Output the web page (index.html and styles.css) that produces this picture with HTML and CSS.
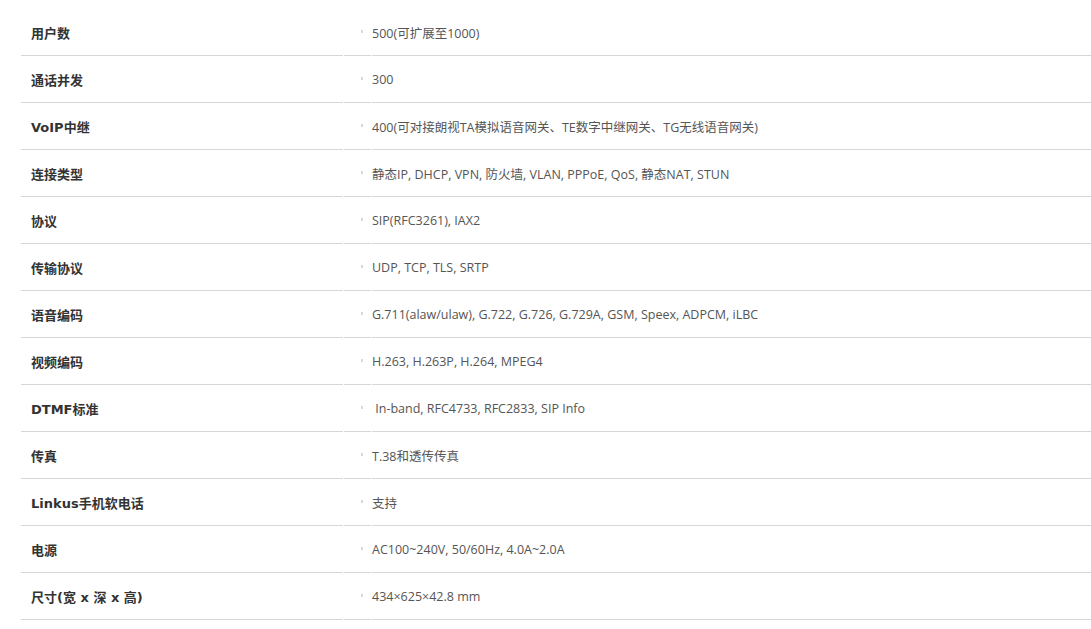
FILE: index.html
```html
<!DOCTYPE html>
<html lang="zh">
<head>
<meta charset="utf-8">
<link rel="stylesheet" href="styles.css">
</head>
<body>
<div class="spec">
  <div class="row"><div class="k">用户数</div><div class="dot"><i></i></div><div class="v">500(可扩展至1000)</div></div>
  <div class="row"><div class="k">通话并发</div><div class="dot"><i></i></div><div class="v">300</div></div>
  <div class="row"><div class="k">VoIP中继</div><div class="dot"><i></i></div><div class="v">400(可对接朗视TA模拟语音网关、TE数字中继网关、TG无线语音网关)</div></div>
  <div class="row"><div class="k">连接类型</div><div class="dot"><i></i></div><div class="v">静态IP, DHCP, VPN, 防火墙, VLAN, PPPoE, QoS, 静态NAT, STUN</div></div>
  <div class="row"><div class="k">协议</div><div class="dot"><i></i></div><div class="v">SIP(RFC3261), IAX2</div></div>
  <div class="row"><div class="k">传输协议</div><div class="dot"><i></i></div><div class="v">UDP, TCP, TLS, SRTP</div></div>
  <div class="row"><div class="k">语音编码</div><div class="dot"><i></i></div><div class="v">G.711(alaw/ulaw), G.722, G.726, G.729A, GSM, Speex, ADPCM, iLBC</div></div>
  <div class="row"><div class="k">视频编码</div><div class="dot"><i></i></div><div class="v">H.263, H.263P, H.264, MPEG4</div></div>
  <div class="row"><div class="k">DTMF标准</div><div class="dot"><i></i></div><div class="v">&nbsp;In-band, RFC4733, RFC2833, SIP Info</div></div>
  <div class="row"><div class="k">传真</div><div class="dot"><i></i></div><div class="v">T.38和透传传真</div></div>
  <div class="row"><div class="k">Linkus手机软电话</div><div class="dot"><i></i></div><div class="v">支持</div></div>
  <div class="row"><div class="k">电源</div><div class="dot"><i></i></div><div class="v">AC100~240V, 50/60Hz, 4.0A~2.0A</div></div>
  <div class="row"><div class="k">尺寸(宽 x 深 x 高)</div><div class="dot"><i></i></div><div class="v">434×625×42.8 mm</div></div>
</div>
</body>
</html>
```

FILE: styles.css
```css
html, body {
  margin: 0;
  padding: 0;
  background: #fff;
}
body {
  padding: 9px 0 0 21px;
}
.spec {
  display: flex;
  flex-direction: column;
}
.row {
  display: grid;
  grid-template-columns: 322px 27px 1fr;
  column-gap: 1px;
  height: 47px;
}
.row > div {
  border-bottom: 1px solid #d6d6d6;
  display: flex;
  align-items: center;
}
.k {
  padding-left: 10px;
  font-family: "DejaVu Sans", "Noto Sans CJK SC", sans-serif;
  font-weight: bold;
  font-size: 13px;
  color: #333;
}
.dot {
  justify-content: flex-end;
  padding-right: 8px;
}
.dot i {
  display: block;
  width: 2px;
  height: 3px;
  background: #d8d8d8;
  margin-top: -1px;
}
.v {
  font-family: "Open Sans", "Noto Sans CJK SC", sans-serif;
  font-size: 12.5px;
  color: #555;
  white-space: nowrap;
}
```
